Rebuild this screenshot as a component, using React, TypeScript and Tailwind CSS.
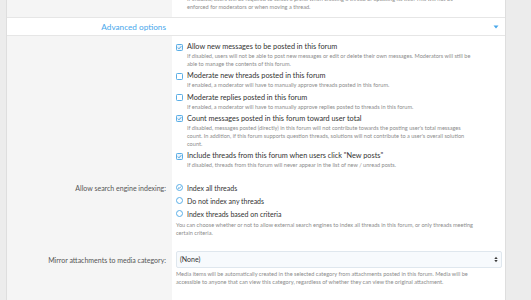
import React from "react";

type CheckItem = {
  label: string;
  checked: boolean;
  hint: string[];
};

const checkItems: CheckItem[] = [
  {
    label: "Allow new messages to be posted in this forum",
    checked: true,
    hint: [
      "If disabled, users will not be able to post new messages or edit or delete their own messages. Moderators will still be",
      "able to manage the contents of this forum.",
    ],
  },
  {
    label: "Moderate new threads posted in this forum",
    checked: false,
    hint: ["If enabled, a moderator will have to manually approve threads posted in this forum."],
  },
  {
    label: "Moderate replies posted in this forum",
    checked: false,
    hint: ["If enabled, a moderator will have to manually approve replies posted to threads in this forum."],
  },
  {
    label: "Count messages posted in this forum toward user total",
    checked: true,
    hint: [
      "If disabled, messages posted (directly) in this forum will not contribute towards the posting user's total messages",
      "count. In addition, if this forum supports question threads, solutions will not contribute to a user's overall solution",
      "count.",
    ],
  },
  {
    label: 'Include threads from this forum when users click "New posts"',
    checked: true,
    hint: ["If disabled, threads from this forum will never appear in the list of new / unread posts."],
  },
];

const radios = [
  { label: "Index all threads", checked: true },
  { label: "Do not index any threads", checked: false },
  { label: "Index threads based on criteria", checked: false },
];

function CheckBox({ checked }: { checked: boolean }) {
  return (
    <svg width="7" height="7" viewBox="0 0 7 7" className="block">
      <rect x="0.5" y="0.5" width="6" height="6" rx="0.8" fill={checked ? "#eaf4fc" : "#ffffff"} stroke="#5aaee6" strokeWidth="1" />
      {checked ? (
        <path d="M1.8 3.6 L3 4.8 L5.3 2.2" fill="none" stroke="#3d97d6" strokeWidth="0.9" />
      ) : null}
    </svg>
  );
}

function Radio({ checked }: { checked: boolean }) {
  return (
    <svg width="7" height="7" viewBox="0 0 7 7" className="block">
      <circle cx="3.5" cy="3.5" r="3" fill="#ffffff" stroke="#5aaee6" strokeWidth="1" />
      {checked ? (
        <path d="M2 3.6 L3.1 4.6 L5 2.5" fill="none" stroke="#3d97d6" strokeWidth="0.9" />
      ) : null}
    </svg>
  );
}

function Hint({ lines }: { lines: string[] }) {
  return (
    <div className="text-[5.6px] leading-[8px] text-[#8c8c8c]">
      {lines.map((line, i) => (
        <div key={i} className="whitespace-nowrap">
          {line}
        </div>
      ))}
    </div>
  );
}

export default function App() {
  return (
    <div className="flex h-[300px] w-[531px] overflow-hidden bg-[#ececec] font-['Lato',sans-serif]">
      <div className="w-[6px] shrink-0" />
      <div className="flex w-[500px] shrink-0 flex-col border-x border-[#dedede] bg-white">
        {/* tail of the previous option */}
        <div className="flex h-[18px] shrink-0 border-b border-[#e6e6e6]">
          <div className="w-[165px] shrink-0 bg-[#f5f5f5]" />
          <div className="overflow-hidden pl-[15px]">
            <div className="-mt-[5px]">
              <Hint
                lines={[
                  "If enabled, users will be required to select a prefix when creating a thread or updating its title. This will not be",
                  "enforced for moderators or when moving a thread.",
                ]}
              />
            </div>
          </div>
        </div>

        <div className="flex h-[18px] shrink-0 items-center border-b border-[#e6e6e6]">
          <div className="w-[165px] shrink-0 pr-[6px] text-right text-[8.2px] leading-[10px] text-[#47a7eb]">
            Advanced options
          </div>
          <div className="flex flex-1 justify-end pr-[6px]">
            <svg width="6" height="4" viewBox="0 0 6 4" className="block">
              <path d="M0.5 0.5 H5.5 L3 3.5 Z" fill="#47a7eb" />
            </svg>
          </div>
        </div>

        <div className="flex shrink-0">
          <div className="w-[165px] shrink-0 bg-[#f5f5f5]" />
          <div className="flex flex-col gap-[3.25px] pb-[6.5px] pl-[4px] pt-[6px]">
            {checkItems.map((item) => (
              <div key={item.label} className="flex">
                <div className="flex h-[10px] w-[11px] shrink-0 items-center">
                  <CheckBox checked={item.checked} />
                </div>
                <div>
                  <div className="whitespace-nowrap text-[7.3px] leading-[10px] text-[#333333]">{item.label}</div>
                  <Hint lines={item.hint} />
                </div>
              </div>
            ))}
          </div>
        </div>

        <div className="flex shrink-0">
          <div className="w-[165px] shrink-0 bg-[#f5f5f5] pr-[6px] pt-[7px] text-right text-[7px] leading-[10px] text-[#555555]">
            Allow search engine indexing:
          </div>
          <div className="flex flex-col pb-[7px] pl-[4px] pt-[7px]">
            <div className="flex flex-col gap-[3px]">
              {radios.map((r) => (
                <div key={r.label} className="flex">
                  <div className="flex h-[10px] w-[11px] shrink-0 items-center">
                    <Radio checked={r.checked} />
                  </div>
                  <div className="whitespace-nowrap text-[7px] leading-[10px] text-[#333333]">{r.label}</div>
                </div>
              ))}
            </div>
            <div className="mt-[2px]">
              <Hint
                lines={[
                  "You can choose whether or not to allow external search engines to index all threads in this forum, or only threads meeting",
                  "certain criteria.",
                ]}
              />
            </div>
          </div>
        </div>

        <div className="flex flex-1">
          <div className="w-[165px] shrink-0 bg-[#f5f5f5] pr-[6px] pt-[11.5px] text-right text-[7px] leading-[10px] text-[#555555]">
            Mirror attachments to media category:
          </div>
          <div className="flex flex-1 flex-col pl-[4px] pr-[3px] pt-[7px]">
            <div className="flex h-[17px] items-center justify-between rounded-[2px] border border-[#dfe7ee] bg-[#f7fafd] pl-[3px] pr-[3px]">
              <span className="text-[7px] leading-[10px] text-[#333333]">(None)</span>
              <svg width="4" height="7" viewBox="0 0 4 7" className="block">
                <path d="M0.3 3 L2 0.8 L3.7 3 Z" fill="#3c3c3c" />
                <path d="M0.3 4 L2 6.2 L3.7 4 Z" fill="#3c3c3c" />
              </svg>
            </div>
            <div className="mt-[2.5px]">
              <Hint
                lines={[
                  "Media items will be automatically created in the selected category from attachments posted in this forum. Media will be",
                  "accessible to anyone that can view this category, regardless of whether they can view the original attachment.",
                ]}
              />
            </div>
          </div>
        </div>
      </div>
    </div>
  );
}
